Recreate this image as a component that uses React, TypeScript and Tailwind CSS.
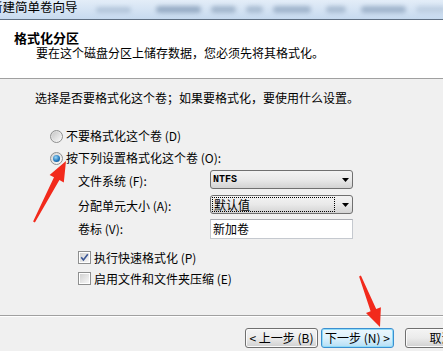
import React from "react";

function Radio({ checked }: { checked?: boolean }) {
  return (
    <span className="flex h-[13px] w-[13px] shrink-0 items-center justify-center rounded-full border border-[#8e8f8f] bg-gradient-to-br from-[#d4d4d4] to-[#fbfbfb]">
      {checked ? (
        <span className="h-[7px] w-[7px] rounded-full bg-[radial-gradient(circle_at_40%_35%,#9ad8f8,#1c72b8_60%,#0b4a85)]" />
      ) : (
        <span className="h-[9px] w-[9px] rounded-full bg-gradient-to-br from-[#c8c8c8] to-[#f6f6f6]" />
      )}
    </span>
  );
}

function Checkbox({ checked }: { checked?: boolean }) {
  return (
    <span className="flex h-[13px] w-[13px] shrink-0 items-center justify-center border border-[#8e8f8f] bg-white">
      <span className="flex h-[9px] w-[9px] items-center justify-center bg-gradient-to-br from-[#d2d2d2] to-[#f7f7f7]">
        {checked ? (
          <svg width="9" height="9" viewBox="0 0 9 9">
            <path d="M1.2 4.3 L3.4 7 L7.8 1.2" fill="none" stroke="#3b5695" strokeWidth="1.6" />
          </svg>
        ) : null}
      </span>
    </span>
  );
}

function Caret() {
  return (
    <svg width="7" height="4" viewBox="0 0 7 4" className="shrink-0">
      <path d="M0 0 H7 L3.5 4 Z" fill="#000" />
    </svg>
  );
}

export default function App() {
  return (
    <div className="relative flex h-[351px] w-[443px] flex-col overflow-hidden bg-[#f0f0f0] font-['Noto_Sans_CJK_SC',sans-serif] text-[12px] leading-[14px] text-black">
      {/* title bar */}
      <div className="flex h-[20px] shrink-0 items-center overflow-hidden border-b border-[#5f6f82] bg-gradient-to-b from-[#e3edf8] to-[#c7daef]">
        <span className="-mt-[4px] -ml-[10px] shrink-0 text-[12.5px] leading-none">新建简单卷向导</span>
        <span className="ml-[18px] h-[6px] w-[35px] shrink-0 rounded-full bg-[#9db2ca] opacity-60 blur-[2px]" />
        <span className="ml-[25px] h-[7px] w-[45px] shrink-0 rounded-full bg-[#7e96b2] opacity-70 blur-[2px]" />
        <span className="ml-[10px] h-[7px] w-[25px] shrink-0 rounded-full bg-[#8ea4bd] opacity-70 blur-[2px]" />
        <span className="ml-[10px] h-[7px] w-[17px] shrink-0 rounded-full bg-[#8ea4bd] opacity-60 blur-[2px]" />
        <span className="ml-[10px] h-[7px] w-[38px] shrink-0 rounded-full bg-[#7e96b2] opacity-60 blur-[2px]" />
        <span className="ml-[15px] h-[7px] w-[20px] shrink-0 rounded-full bg-[#8ea4bd] opacity-60 blur-[2px]" />
        <span className="ml-[15px] h-[7px] w-[45px] shrink-0 rounded-full bg-[#7e96b2] opacity-60 blur-[2px]" />
        <span className="ml-[10px] h-[7px] w-[30px] shrink-0 rounded-full bg-[#a9bcd2] opacity-50 blur-[2px]" />
      </div>

      {/* header */}
      <div className="h-[59px] shrink-0 border-b border-[#a0a0a0] bg-white pl-[14px] pt-[10px]">
        <div className="text-[13px] font-bold leading-[15px]">格式化分区</div>
        <div className="mt-[1px] pl-[22px]">要在这个磁盘分区上储存数据，您必须先将其格式化。</div>
      </div>

      {/* body */}
      <div className="flex flex-1 flex-col pl-[35px] pt-[12px]">
        <p>选择是否要格式化这个卷；如果要格式化，要使用什么设置。</p>

        <div className="ml-[15px] mt-[20px] flex flex-col">
          <div className="flex h-[22px] items-center gap-[3px]">
            <Radio />
            <span>不要格式化这个卷 (D)</span>
          </div>
          <div className="flex h-[22px] items-center gap-[3px]">
            <Radio checked />
            <span>按下列设置格式化这个卷 (O):</span>
          </div>
        </div>

        <div className="ml-[43px] mt-[1px] flex flex-col">
          <div className="flex items-center">
            <span className="w-[132px] pt-[2px]">文件系统 (F):</span>
            <div className="flex h-[19px] w-[143px] items-center rounded-[3px] border border-[#707070] bg-gradient-to-b from-[#f3f3f3] via-[#e9e9e9] to-[#d3d3d3] pl-[2px] pr-[3px]">
              <span className="flex-1 font-['Liberation_Mono',monospace] text-[10px] font-bold">NTFS</span>
              <Caret />
            </div>
          </div>
          <div className="mt-[6px] flex items-center">
            <span className="w-[132px] pt-[2px]">分配单元大小 (A):</span>
            <div className="flex h-[19px] w-[143px] items-center rounded-[3px] border border-[#707070] bg-gradient-to-b from-[#f3f3f3] via-[#e9e9e9] to-[#d3d3d3] pl-[1px] pr-[3px]">
              <span className="flex h-[15px] w-[123px] items-center border border-dotted border-black pl-[1px]">默认值</span>
              <span className="flex-1" />
              <Caret />
            </div>
          </div>
          <div className="mt-[5px] flex items-center">
            <span className="w-[132px]">卷标 (V):</span>
            <div className="flex h-[20px] w-[143px] items-center border border-[#c5c9cf] border-t-[#abadb3] bg-white pl-[2px]">
              新加卷
            </div>
          </div>

          <div className="mt-[8px] flex h-[21px] items-center gap-[3px]">
            <Checkbox checked />
            <span>执行快速格式化 (P)</span>
          </div>
          <div className="flex h-[21px] items-center gap-[3px]">
            <Checkbox />
            <span>启用文件和文件夹压缩 (E)</span>
          </div>
        </div>
      </div>

      {/* footer */}
      <div className="h-[36px] shrink-0 border-t border-[#a0a0a0]">
        <div className="flex h-full border-t border-white pl-[245px] pt-[11px]">
          <button className="flex h-[20px] w-[73px] shrink-0 items-center justify-center rounded-[3px] border border-[#707070] bg-gradient-to-b from-[#f4f4f4] via-[#ebebeb] to-[#d0d0d0] shadow-[inset_0_0_0_1px_#fbfbfb]">
            &lt; 上一步 (B)
          </button>
          <button className="ml-[3px] flex h-[20px] w-[73px] shrink-0 items-center justify-center rounded-[3px] border border-[#3c8fd0] bg-gradient-to-b from-[#ecf7fd] via-[#dcf1fc] to-[#b4def5] shadow-[inset_0_0_0_1px_#8fdcf8]">
            下一步 (N) &gt;
          </button>
          <button className="ml-[11px] flex h-[20px] w-[73px] shrink-0 items-center justify-center rounded-[3px] border border-[#707070] bg-gradient-to-b from-[#f4f4f4] via-[#ebebeb] to-[#d0d0d0] shadow-[inset_0_0_0_1px_#fbfbfb]">
            取消
          </button>
        </div>
      </div>

      {/* red annotation arrows */}
      <svg className="pointer-events-none absolute inset-0" width="443" height="351" viewBox="0 0 443 351">
        <polygon
          points="66,161 63.8,182.4 59.4,180.1 34.9,222.5 33.1,221.5 54,177.3 49.6,175"
          fill="#f22a1c"
        />
        <polygon
          points="380,327 366,313.1 370.6,311.3 359.1,276.4 360.9,275.6 376.2,309.1 380.9,307.3"
          fill="#f22a1c"
        />
      </svg>
    </div>
  );
}
